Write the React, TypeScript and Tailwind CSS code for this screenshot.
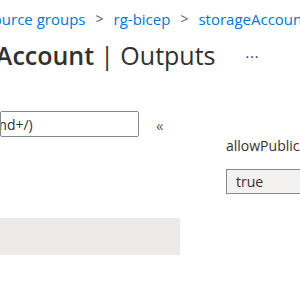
import React from "react";

export default function App() {
  return (
    <div
      className="w-[300px] h-[300px] overflow-hidden bg-white text-[#323130]"
      style={{ fontFamily: '"Open Sans", "Noto Sans", sans-serif' }}
    >
      {/* breadcrumb */}
      <div className="pt-[8px] ml-[-32px] flex items-center whitespace-nowrap text-[15px] leading-[22px] text-[#0078d4]">
        <span>Resource groups</span>
        <span className="mx-[10px] text-[#605e5c] text-[14px]">&gt;</span>
        <span>rg-bicep</span>
        <span className="mx-[10px] text-[#605e5c] text-[14px]">&gt;</span>
        <span>storageAccount</span>
      </div>
      {/* title */}
      <div className="mt-[8px] ml-[-95px] flex items-center whitespace-nowrap h-[36px]">
        <span className="text-[25px] font-semibold">storageAccount</span>
        <span className="text-[25px] font-normal ml-[6px]">| Outputs</span>
        <span className="ml-[30px] text-[14px] text-[#323130] tracking-[1px] -mt-[8px]">...</span>
      </div>
      {/* body */}
      <div className="flex mt-[37px]">
        <div className="w-[180px] shrink-0 flex flex-col">
          <div className="flex items-center">
            <div className="w-[139px] h-[26px] border border-[#8a8886] rounded-[2px] flex items-center overflow-hidden">
              <span className="ml-[-68px] text-[14px] whitespace-nowrap">Search (Cmd+/)</span>
            </div>
            <span className="ml-[17px] mt-[3px] text-[15px] text-[#605e5c] leading-none">«</span>
          </div>
          <div className="mt-[81px] h-[37px] bg-[#edebe9]" />
        </div>
        <div className="ml-[46px] flex flex-col pt-[26px]">
          <span className="text-[14px] leading-[18px] whitespace-nowrap">allowPublicAccess</span>
          <div className="mt-[14px] w-[200px] h-[25px] border border-[#8a8886] bg-[#f3f2f1] flex items-center pl-[9px] text-[14px]">
            true
          </div>
        </div>
      </div>
    </div>
  );
}
